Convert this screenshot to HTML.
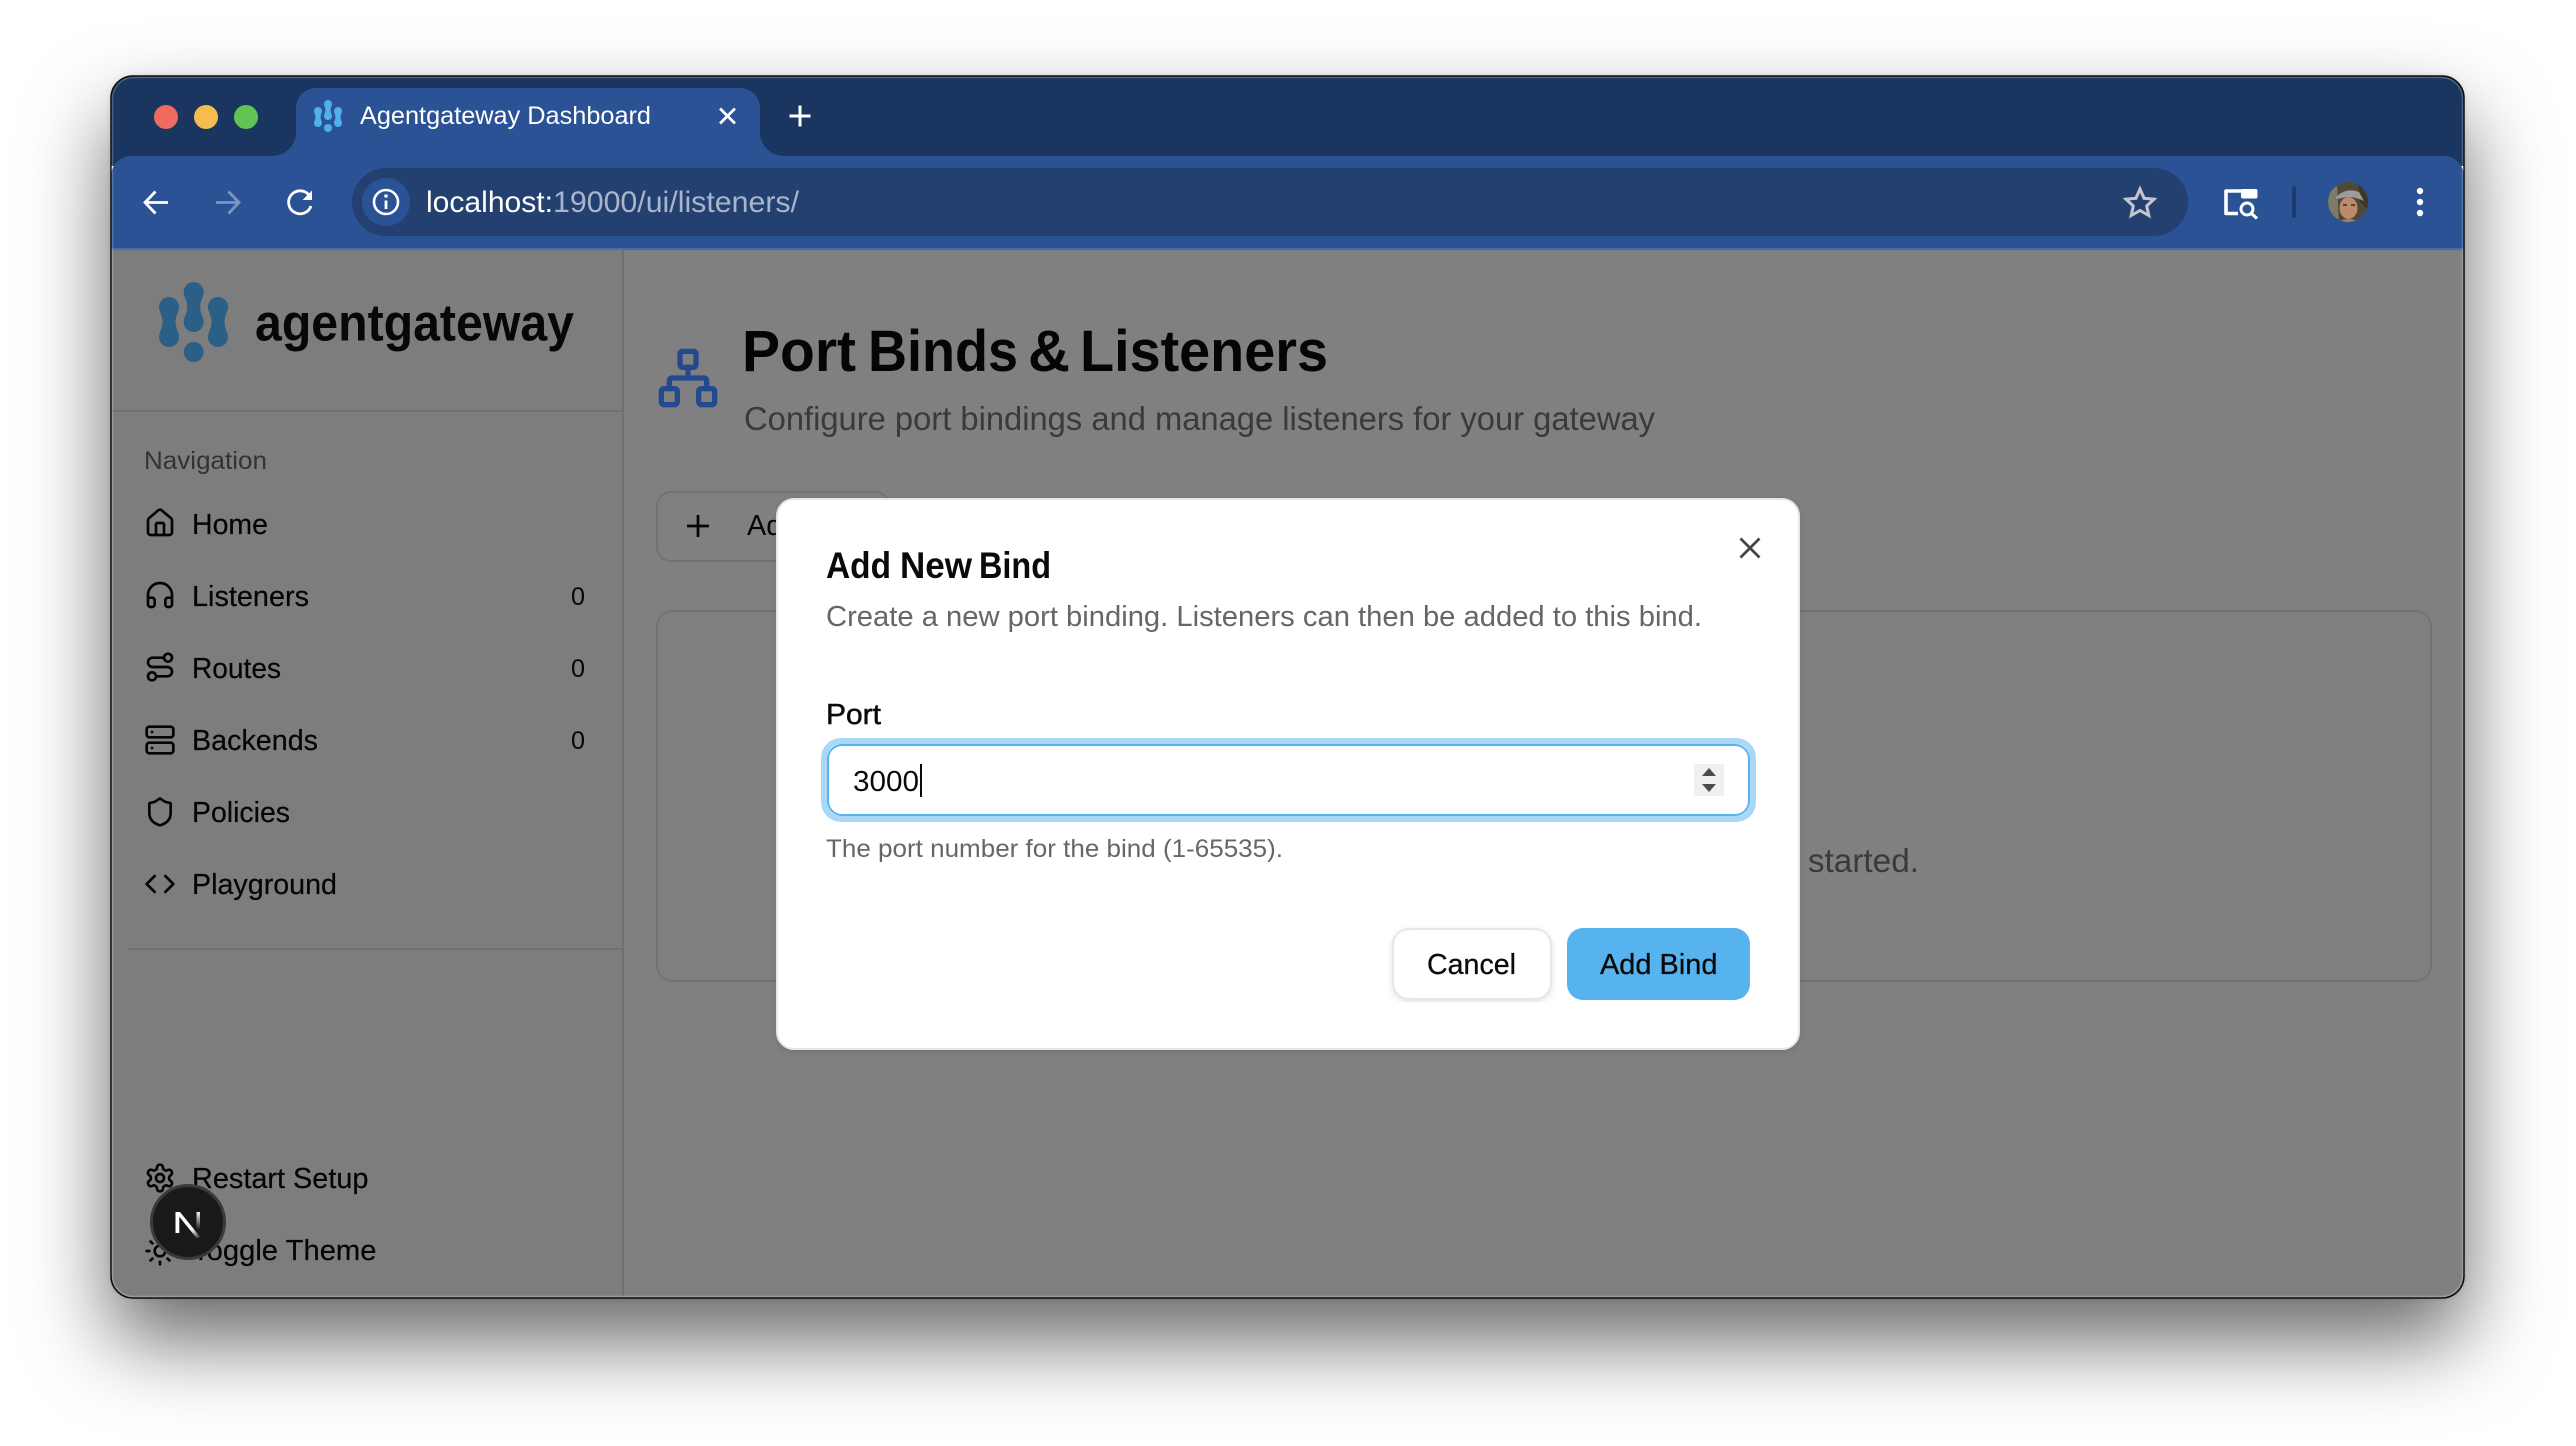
<!DOCTYPE html>
<html lang="en"><head><meta charset="utf-8"><title>Agentgateway Dashboard</title>
<style>
html,body{margin:0;padding:0;background:#fff;width:2576px;height:1446px;overflow:hidden}
#shadow{position:absolute;left:111px;top:76px;width:2353px;height:1222px;border-radius:22px;box-shadow:0 42px 84px rgba(0,0,0,.6),0 0 6px rgba(0,0,0,.15)}
svg{position:absolute;left:0;top:0;display:block}
text{font-family:"Liberation Sans",sans-serif}
.i{fill:none;stroke:#050505;stroke-width:2;stroke-linecap:round;stroke-linejoin:round}
.n{font-size:29px;fill:#050505;stroke:#050505;stroke-width:.2px}
</style></head><body>
<div id="shadow"></div>
<svg width="2576" height="1446" viewBox="0 0 2576 1446" xmlns="http://www.w3.org/2000/svg">
<defs>
<clipPath id="win"><rect x="111" y="76" width="2353" height="1222" rx="22"/></clipPath>
<clipPath id="av"><circle cx="2348" cy="202" r="20"/></clipPath>
<path id="pn" d="M10 0a10 10 0 0 1 10 10c0 5-3.5 8-3.5 15s3.5 10 3.5 15a10 10 0 0 1-20 0c0-5 3.5-8 3.5-15S0 15 0 10A10 10 0 0 1 10 0z"/>
<linearGradient id="ng" gradientUnits="userSpaceOnUse" x1="176" y1="1212" x2="201" y2="1238"><stop offset=".65" stop-color="#fff"/><stop offset="1" stop-color="#fff" stop-opacity="0"/></linearGradient>
<linearGradient id="ns" x1="0" y1="0" x2="0" y2="1"><stop offset="0" stop-color="#fff" stop-opacity=".95"/><stop offset=".85" stop-color="#fff" stop-opacity="0"/></linearGradient>
<filter id="ms" x="-5%" y="-5%" width="110%" height="110%"><feDropShadow dx="0" dy="2" stdDeviation="3" flood-color="#000" flood-opacity=".12"/></filter>
</defs>

<g clip-path="url(#win)">
<!-- chrome -->
<rect x="111" y="76" width="2353" height="90" fill="#1a355f"/>
<path d="M111 176a20 20 0 0 1 20-20H2444a20 20 0 0 1 20 20V250H111z" fill="#2a5294"/>
<path d="M272 156A24 24 0 0 0 296 132V108A20 20 0 0 1 316 88H740A20 20 0 0 1 760 108V132A24 24 0 0 0 784 156z" fill="#2a5294"/>
<rect x="111" y="248" width="2353" height="2" fill="#4a6da6"/>

<circle cx="166" cy="117" r="12" fill="#ef6a5f"/>
<circle cx="206" cy="117" r="12" fill="#f5bd4f"/>
<circle cx="246" cy="117" r="12" fill="#61c554"/>

<g fill="#4fb0ea">
<use href="#pn" transform="translate(324 100) scale(.4)"/>
<use href="#pn" transform="translate(314 107) scale(.4)"/>
<use href="#pn" transform="translate(334 107) scale(.4)"/>
<circle cx="328" cy="128" r="4"/>
</g>
<text x="360" y="124" font-size="25" fill="#fff" textLength="291" lengthAdjust="spacingAndGlyphs">Agentgateway Dashboard</text>
<path d="M720 108.500L735 123.500M735 108.500L720 123.500" stroke="#fff" stroke-width="2.700" fill="none"/>
<path d="M800 105.500V126.500M789.500 116H810.500" stroke="#fff" stroke-width="3" fill="none"/>

<!-- nav -->
<path d="M168 202.500H146M155.500 191.500L145 202.500L155.500 213.500" stroke="#fff" stroke-width="2.800" fill="none"/>
<path d="M216 202.500H238M228.500 191.500L239 202.500L228.500 213.500" stroke="#7d95bf" stroke-width="2.800" fill="none"/>
<path d="M309 195A11.500 11.500 0 1 0 311 206" stroke="#fff" stroke-width="2.800" fill="none"/>
<path d="M312 190.500V200H302.500z" fill="#fff"/>

<rect x="352" y="168" width="1836" height="68" rx="34" fill="#244070"/>
<circle cx="386" cy="202" r="24" fill="#2a5294"/>
<circle cx="386" cy="202" r="12" fill="none" stroke="#fff" stroke-width="2.600"/>
<circle cx="386" cy="196" r="1.800" fill="#fff"/>
<path d="M386 200.500V209" stroke="#fff" stroke-width="2.800"/>
<text x="426" y="212" font-size="30" fill="#fff" textLength="127" lengthAdjust="spacingAndGlyphs">localhost:</text>
<text x="553" y="212" font-size="30" fill="#a9b5ca" textLength="246" lengthAdjust="spacingAndGlyphs">19000/ui/listeners/</text>
<path d="M2140 189L2144.100 198.300L2154 199.200L2146.700 206L2148.800 215.500L2140 210.500L2131.200 215.500L2133.300 206L2126 199.200L2135.900 198.300z" fill="none" stroke="#c4c6cc" stroke-width="3" stroke-linejoin="miter"/>

<path d="M2238 213.500H2226V191H2242" fill="none" stroke="#fff" stroke-width="3.600" stroke-linejoin="round"/>
<rect x="2241" y="189" width="16.500" height="9.500" rx="2" fill="#fff"/>
<circle cx="2247" cy="209" r="6" fill="none" stroke="#fff" stroke-width="3"/>
<path d="M2251.500 213.500L2257 218.500" stroke="#fff" stroke-width="3.200"/>
<rect x="2292" y="186" width="4" height="32" rx="2" fill="#1c3a6c"/>

<g clip-path="url(#av)">
<rect x="2328" y="182" width="40" height="40" fill="#4f4a38"/>
<path d="M2328 222V192l9-6 2 36z" fill="#7d7a66"/>
<path d="M2358 184l10 6v20l-8-8z" fill="#3f3628"/>
<ellipse cx="2348.500" cy="208" rx="9" ry="11" fill="#bd8a6c"/>
<path d="M2336 197q10-10 23-5l5 9q-12-6-22-3l-5 1z" fill="#9c9c9c"/>
<path d="M2338 222q10-6 22 0z" fill="#a88068"/>
<path d="M2343 205h4M2351 205h4" stroke="#3a2a20" stroke-width="1.500"/>
</g>
<circle cx="2420" cy="191" r="3.200" fill="#fff"/><circle cx="2420" cy="202" r="3.200" fill="#fff"/><circle cx="2420" cy="213" r="3.200" fill="#fff"/>

<!-- page -->
<rect x="111" y="250" width="2353" height="1048" fill="#808080"/>
<rect x="111" y="250" width="512" height="1048" fill="#7d7d7d"/>
<rect x="622" y="250" width="2" height="1048" fill="#717171"/>
<rect x="111" y="410" width="512" height="2" fill="#717171"/>
<rect x="128" y="948" width="495" height="2" fill="#717171"/>

<g fill="#2b5f85">
<use href="#pn" transform="translate(183.700 282)"/>
<use href="#pn" transform="translate(159 297)"/>
<use href="#pn" transform="translate(208 297)"/>
<circle cx="193.700" cy="352" r="10"/>
</g>
<text x="255" y="340.500" font-size="52" font-weight="700" fill="#070707" textLength="319" lengthAdjust="spacingAndGlyphs">agentgateway</text>
<text x="144" y="469" font-size="25" fill="#333" textLength="123" lengthAdjust="spacingAndGlyphs">Navigation</text>

<g class="i" transform="translate(144 507) scale(1.333)"><path d="M15 21v-8a1 1 0 0 0-1-1h-4a1 1 0 0 0-1 1v8"/><path d="M3 10a2 2 0 0 1 .709-1.528l7-5.999a2 2 0 0 1 2.582 0l7 5.999A2 2 0 0 1 21 10v9a2 2 0 0 1-2 2H5a2 2 0 0 1-2-2z"/></g>
<g class="i" transform="translate(144 579) scale(1.333)"><path d="M3 14h3a2 2 0 0 1 2 2v3a2 2 0 0 1-2 2H5a2 2 0 0 1-2-2v-7a9 9 0 0 1 18 0v7a2 2 0 0 1-2 2h-1a2 2 0 0 1-2-2v-3a2 2 0 0 1 2-2h3"/></g>
<g class="i" transform="translate(144 651) scale(1.333)"><circle cx="6" cy="19" r="3"/><path d="M9 19h8.500a3.500 3.500 0 0 0 0-7h-11a3.500 3.500 0 0 1 0-7H15"/><circle cx="18" cy="5" r="3"/></g>
<g class="i" transform="translate(144 724) scale(1.333)"><rect width="20" height="8" x="2" y="2" rx="2"/><rect width="20" height="8" x="2" y="14" rx="2"/><path d="M6 6h.010M6 18h.010"/></g>
<g class="i" transform="translate(144 796) scale(1.333)"><path d="M20 13c0 5-3.500 7.500-7.660 8.950a1 1 0 0 1-.670-.010C7.500 20.500 4 18 4 13V6a1 1 0 0 1 1-1c2 0 4.500-1.200 6.240-2.720a1.170 1.170 0 0 1 1.520 0C14.510 3.810 17 5 19 5a1 1 0 0 1 1 1z"/></g>
<g class="i" transform="translate(144 868) scale(1.333)"><path d="m16 18 6-6-6-6"/><path d="m8 6-6 6 6 6"/></g>
<g class="i" transform="translate(144 1162) scale(1.333)"><path d="M12.220 2h-.440a2 2 0 0 0-2 2v.180a2 2 0 0 1-1 1.730l-.430.250a2 2 0 0 1-2 0l-.150-.080a2 2 0 0 0-2.730.730l-.220.380a2 2 0 0 0 .730 2.730l.150.100a2 2 0 0 1 1 1.720v.510a2 2 0 0 1-1 1.740l-.150.090a2 2 0 0 0-.730 2.730l.220.380a2 2 0 0 0 2.730.730l.150-.080a2 2 0 0 1 2 0l.430.250a2 2 0 0 1 1 1.730V20a2 2 0 0 0 2 2h.440a2 2 0 0 0 2-2v-.180a2 2 0 0 1 1-1.730l.430-.250a2 2 0 0 1 2 0l.150.080a2 2 0 0 0 2.730-.730l.220-.390a2 2 0 0 0-.730-2.730l-.150-.080a2 2 0 0 1-1-1.740v-.500a2 2 0 0 1 1-1.740l.150-.090a2 2 0 0 0 .730-2.730l-.220-.380a2 2 0 0 0-2.730-.730l-.150.080a2 2 0 0 1-2 0l-.430-.250a2 2 0 0 1-1-1.730V4a2 2 0 0 0-2-2z"/><circle cx="12" cy="12" r="3"/></g>
<g class="i" transform="translate(144 1235) scale(1.333)"><circle cx="12" cy="12" r="4"/><path d="M12 2v2M12 20v2M4.930 4.930l1.410 1.410M17.660 17.660l1.410 1.410M2 12h2M20 12h2M6.340 17.660l-1.410 1.410M19.070 4.930l-1.410 1.410"/></g>

<text class="n" x="192" y="534" textLength="76" lengthAdjust="spacingAndGlyphs">Home</text>
<text class="n" x="192" y="606" textLength="117" lengthAdjust="spacingAndGlyphs">Listeners</text>
<text class="n" x="192" y="678" textLength="89" lengthAdjust="spacingAndGlyphs">Routes</text>
<text class="n" x="192" y="750" textLength="126" lengthAdjust="spacingAndGlyphs">Backends</text>
<text class="n" x="192" y="822" textLength="98" lengthAdjust="spacingAndGlyphs">Policies</text>
<text class="n" x="192" y="894" textLength="145" lengthAdjust="spacingAndGlyphs">Playground</text>
<text class="n" x="192" y="1188" textLength="176.500" lengthAdjust="spacingAndGlyphs">Restart Setup</text>
<text class="n" x="192" y="1260" textLength="184.500" lengthAdjust="spacingAndGlyphs">Toggle Theme</text>
<text x="571" y="605" font-size="25" fill="#050505" textLength="14" lengthAdjust="spacingAndGlyphs">0</text>
<text x="571" y="677" font-size="25" fill="#050505" textLength="14" lengthAdjust="spacingAndGlyphs">0</text>
<text x="571" y="749" font-size="25" fill="#050505" textLength="14" lengthAdjust="spacingAndGlyphs">0</text>

<circle cx="188" cy="1222" r="36.500" fill="#191919" stroke="#3b3b3b" stroke-width="3"/>
<rect x="175.500" y="1212" width="3.800" height="21" fill="#fff"/>
<path d="M175.500 1212H180L201 1238H196.500z" fill="url(#ng)"/>
<rect x="196.500" y="1212" width="3.500" height="21" fill="url(#ns)"/>

<!-- main -->
<g fill="none" stroke="#24498f" stroke-width="2" stroke-linecap="round" stroke-linejoin="round" transform="translate(656 346) scale(2.667)"><rect x="16" y="16" width="6" height="6" rx="1"/><rect x="2" y="16" width="6" height="6" rx="1"/><rect x="9" y="2" width="6" height="6" rx="1"/><path d="M5 16v-3a1 1 0 0 1 1-1h12a1 1 0 0 1 1 1v3"/><path d="M12 12V8"/></g>
<g font-size="58" font-weight="700" fill="#050505">
<text x="742" y="371" textLength="114" lengthAdjust="spacingAndGlyphs">Port</text>
<text x="868" y="371" textLength="150" lengthAdjust="spacingAndGlyphs">Binds</text>
<text x="1028" y="371" textLength="42" lengthAdjust="spacingAndGlyphs">&amp;</text>
<text x="1080" y="371" textLength="248" lengthAdjust="spacingAndGlyphs">Listeners</text>
</g>
<text x="744" y="430" font-size="33" fill="#3a3a3a" textLength="911" lengthAdjust="spacingAndGlyphs">Configure port bindings and manage listeners for your gateway</text>
<rect x="657" y="492" width="232" height="69" rx="14" fill="#808080" stroke="#737373" stroke-width="2"/>
<path d="M698 515V537M687 526H709" stroke="#050505" stroke-width="2.700"/>
<text x="747" y="535" font-size="29" fill="#050505" textLength="117" lengthAdjust="spacingAndGlyphs">Add Bind</text>
<rect x="657" y="611" width="1774" height="370" rx="16" fill="#808080" stroke="#737373" stroke-width="2"/>
<text x="1167" y="872" font-size="33" fill="#3a3a3a" textLength="752" lengthAdjust="spacingAndGlyphs">No port binds configured. Add a bind to get started.</text>
</g>

<!-- window edge -->
<rect x="111" y="76" width="2353" height="1222" rx="22" fill="none" stroke="#0c0c0c" stroke-width="1.500"/>
<rect x="112.500" y="77.500" width="2350" height="1219" rx="21" fill="none" stroke="#fff" stroke-opacity=".22" stroke-width="1.500"/>

<!-- modal -->
<rect x="777" y="499" width="1022" height="550" rx="17" fill="#fff" stroke="#e6e6e6" stroke-width="2" filter="url(#ms)"/>
<g font-size="37" font-weight="700" fill="#0a0a0a">
<text x="826" y="578" textLength="65" lengthAdjust="spacingAndGlyphs">Add</text>
<text x="900" y="578" textLength="72" lengthAdjust="spacingAndGlyphs">New</text>
<text x="979" y="578" textLength="72" lengthAdjust="spacingAndGlyphs">Bind</text>
</g>
<text x="826" y="626" font-size="29" fill="#666" textLength="876" lengthAdjust="spacingAndGlyphs">Create a new port binding. Listeners can then be added to this bind.</text>
<path d="M1740.500 538.500L1759.500 557.500M1759.500 538.500L1740.500 557.500" stroke="#444" stroke-width="2.700" fill="none"/>
<text x="826" y="724" font-size="29" fill="#0a0a0a" stroke="#0a0a0a" stroke-width=".5" textLength="55" lengthAdjust="spacingAndGlyphs">Port</text>

<rect x="824" y="741" width="929" height="78" rx="17" fill="#fff" stroke="#a9d8f7" stroke-width="6"/>
<rect x="828" y="745" width="921" height="70" rx="14" fill="#fff" stroke="#58b4ee" stroke-width="2"/>
<text x="853" y="791" font-size="29" fill="#0a0a0a" textLength="66" lengthAdjust="spacingAndGlyphs">3000</text>
<rect x="920" y="764" width="2" height="33" fill="#0a0a0a"/>
<rect x="1694" y="764" width="30" height="32" fill="#f0f0f0"/>
<path d="M1709 768L1716 776H1702zM1702 784H1716L1709 792z" fill="#4d4d4d"/>
<text x="826" y="857" font-size="25" fill="#666" textLength="457" lengthAdjust="spacingAndGlyphs">The port number for the bind (1-65535).</text>

<rect x="1393" y="929" width="158" height="70" rx="16" fill="#fff" stroke="#e6e6e6" stroke-width="2" filter="url(#ms)"/>
<text x="1427" y="974" font-size="29" fill="#0a0a0a" stroke="#0a0a0a" stroke-width=".3" textLength="89" lengthAdjust="spacingAndGlyphs">Cancel</text>
<rect x="1567" y="928" width="183" height="72" rx="16" fill="#57b3ee"/>
<text x="1600" y="974" font-size="29" fill="#0a0a0a" stroke="#0a0a0a" stroke-width=".3" textLength="117.500" lengthAdjust="spacingAndGlyphs">Add Bind</text>
</svg>
</body></html>
